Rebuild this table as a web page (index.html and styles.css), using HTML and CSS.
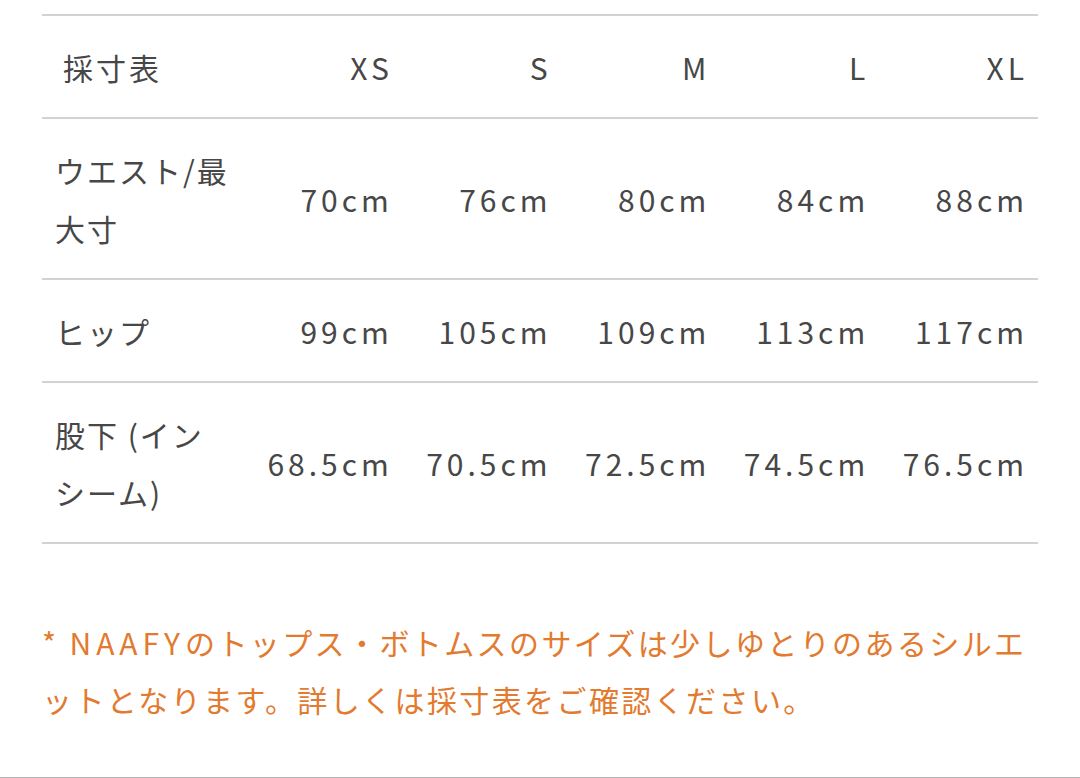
FILE: index.html
```html
<!DOCTYPE html>
<html lang="ja">
<head>
<meta charset="utf-8">
<title>採寸表</title>
<link rel="stylesheet" href="styles.css">
</head>
<body>
<div class="page">
  <table class="size-table">
    <colgroup>
      <col class="col-label">
      <col class="col-size">
      <col class="col-size">
      <col class="col-size">
      <col class="col-size">
      <col class="col-size">
    </colgroup>
    <thead>
      <tr>
        <th class="head-label">採寸表</th>
        <th class="val">XS</th>
        <th class="val">S</th>
        <th class="val">M</th>
        <th class="val">L</th>
        <th class="val">XL</th>
      </tr>
    </thead>
    <tbody>
      <tr>
        <td class="label">ウエスト/最大寸</td>
        <td class="val">70cm</td>
        <td class="val">76cm</td>
        <td class="val">80cm</td>
        <td class="val">84cm</td>
        <td class="val">88cm</td>
      </tr>
      <tr>
        <td class="label">ヒップ</td>
        <td class="val">99cm</td>
        <td class="val">105cm</td>
        <td class="val">109cm</td>
        <td class="val">113cm</td>
        <td class="val">117cm</td>
      </tr>
      <tr>
        <td class="label">股下 (インシーム)</td>
        <td class="val">68.5cm</td>
        <td class="val">70.5cm</td>
        <td class="val">72.5cm</td>
        <td class="val">74.5cm</td>
        <td class="val">76.5cm</td>
      </tr>
    </tbody>
  </table>
  <p class="note">* <span class="latin">NAAFY</span>のトップス・ボトムスのサイズは少しゆとりのあるシルエットとなります。詳しくは採寸表をご確認ください。</p>
</div>
<div class="bottom-rule"></div>
</body>
</html>
```

FILE: styles.css
```css
html, body {
  margin: 0;
  padding: 0;
  background: #ffffff;
}

body {
  font-family: "Noto Sans CJK JP", sans-serif;
  color: #474747;
  font-size: 30px;
  overflow: hidden;
  height: 778px;
  position: relative;
}

.page {
  padding: 14px 42px 0;
}

.size-table {
  width: 100%;
  border-collapse: collapse;
  table-layout: fixed;
  border-top: 2px solid #d2d2d2;
}

.col-label {
  width: 202px;
}

.size-table th,
.size-table td {
  font-weight: 400;
  line-height: 58px;
  padding: 22px 10px 21px 13px;
  vertical-align: middle;
  border-bottom: 2px solid #d2d2d2;
  letter-spacing: 4px;
}

.size-table .head-label {
  text-align: left;
  padding-left: 21px;
  letter-spacing: 3px;
}

.size-table .label {
  text-align: left;
  padding-right: 13px;
  letter-spacing: 2px;
  word-break: break-all;
  line-break: anywhere;
}

.size-table .val {
  text-align: right;
  padding-right: 10px;
  white-space: nowrap;
}

.note {
  margin: 70px 0 0;
  color: #e27a2f;
  font-size: 30px;
  line-height: 57px;
  letter-spacing: 2.4px;
  word-spacing: 2px;
  line-break: loose;
}

.note .latin {
  letter-spacing: 5px;
}

.bottom-rule {
  position: absolute;
  left: 0;
  right: 0;
  bottom: 0;
  height: 1px;
  background: #b4b4b4;
}
```
